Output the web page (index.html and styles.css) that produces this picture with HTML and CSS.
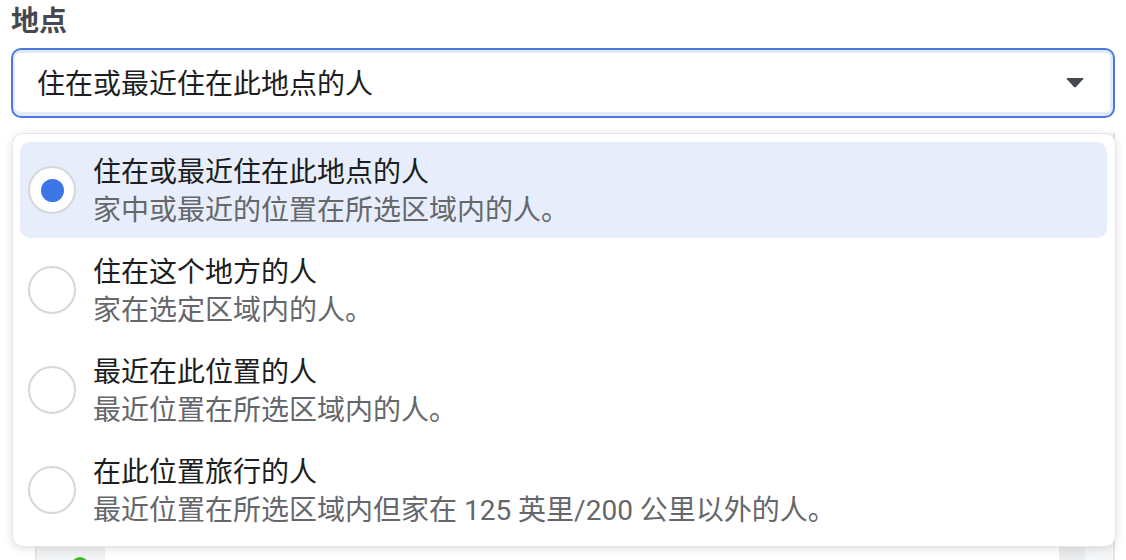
FILE: index.html
```html
<!DOCTYPE html>
<html lang="zh">
<head>
<meta charset="utf-8">
<link rel="stylesheet" href="styles.css">
</head>
<body>
<div class="page">
  <div class="label">地点</div>
  <div class="select">
    <span class="select-text">住在或最近住在此地点的人</span>
    <svg class="caret" width="18" height="10" viewBox="0 0 18 10"><path d="M1.5 0 H16.5 Q18 0 17 1.2 L10.2 8.8 Q9 10 7.8 8.8 L1 1.2 Q0 0 1.5 0 Z" fill="#444950"/></svg>
  </div>
  <div class="below">
    <div class="panel">
      <div class="panel-inner">
        <span class="green-dot"></span>
      </div>
      <div class="panel-side"></div>
    </div>
    <div class="menu">
      <div class="item selected">
        <span class="radio on"><span class="dot"></span></span>
        <div class="texts">
          <div class="title">住在或最近住在此地点的人</div>
          <div class="sub">家中或最近的位置在所选区域内的人。</div>
        </div>
      </div>
      <div class="item">
        <span class="radio"></span>
        <div class="texts">
          <div class="title">住在这个地方的人</div>
          <div class="sub">家在选定区域内的人。</div>
        </div>
      </div>
      <div class="item">
        <span class="radio"></span>
        <div class="texts">
          <div class="title">最近在此位置的人</div>
          <div class="sub">最近位置在所选区域内的人。</div>
        </div>
      </div>
      <div class="item">
        <span class="radio"></span>
        <div class="texts">
          <div class="title">在此位置旅行的人</div>
          <div class="sub">最近位置在所选区域内但家在 125 英里/200 公里以外的人。</div>
        </div>
      </div>
    </div>
  </div>
</div>
</body>
</html>
```

FILE: styles.css
```css
html, body {
  margin: 0;
  padding: 0;
  background: #ffffff;
  font-family: "Roboto", "Noto Sans CJK SC", "Noto Sans", sans-serif;
  overflow: hidden;
}
.page {
  padding: 5px 11px 0 11px;
  width: 1104px;
}
.label {
  font-size: 28px;
  font-weight: 700;
  line-height: 34px;
  color: #444950;
}
.select {
  margin-top: 9px;
  height: 70px;
  box-sizing: border-box;
  border: 2px solid #4a78e0;
  border-radius: 10px;
  box-shadow: inset 0 3px 0 #e3eaf9, inset 0 -4px 0 #e3eaf9, inset 2px 0 0 #e9eefa, inset -3px 0 0 #e3eaf9;
  display: flex;
  align-items: center;
  justify-content: space-between;
  padding: 0 29px 0 24px;
}
.select-text {
  font-size: 28px;
  color: #1c1e21;
  line-height: 36px;
  padding-top: 4px;
}
.caret {
  display: block;
}
.below {
  position: relative;
  margin-top: 15px;
  height: 440px;
}
.panel {
  position: absolute;
  left: 24px;
  right: 0;
  top: 0;
  bottom: 0;
  border-left: 2px solid #e4e6e9;
  border-right: 2px solid #e4e6e9;
  background: #f5f6f7;
  display: flex;
}
.panel-inner {
  flex: 1;
  position: relative;
  background: linear-gradient(to right, #f2f3f4 0, #f2f3f4 68px, #ffffff 68px);
}
.panel-side {
  width: 26px;
  background: #ebecee;
  margin-right: 28px;
}
.green-dot {
  position: absolute;
  left: 34px;
  top: 424px;
  width: 18px;
  height: 18px;
  border-radius: 50%;
  background: #42b72a;
}
.menu {
  position: absolute;
  left: 1px;
  right: -1px;
  top: 0;
  background: #ffffff;
  border: 1px solid #e6e6e6;
  border-radius: 11px;
  box-shadow: 0 2px 10px rgba(0, 0, 0, 0.12);
  padding: 8px 8px 8px 7px;
  display: flex;
  flex-direction: column;
  gap: 4px;
}
.item {
  display: flex;
  align-items: center;
  height: 96px;
  box-sizing: border-box;
  padding: 0 8px;
  border-radius: 10px;
}
.item.selected {
  background: #e7edfa;
}
.radio {
  width: 48px;
  height: 48px;
  box-sizing: border-box;
  border: 2px solid #d5d7da;
  border-radius: 50%;
  background: #ffffff;
  display: flex;
  align-items: center;
  justify-content: center;
  flex-shrink: 0;
}
.radio .dot {
  width: 23px;
  height: 23px;
  border-radius: 50%;
  background: #3b75e6;
}
.texts {
  margin-left: 17px;
  padding-top: 3px;
  display: flex;
  flex-direction: column;
}
.title {
  font-size: 28px;
  line-height: 38px;
  color: #1c1e21;
}
.sub {
  font-size: 28px;
  line-height: 38px;
  color: #65676b;
}
```
